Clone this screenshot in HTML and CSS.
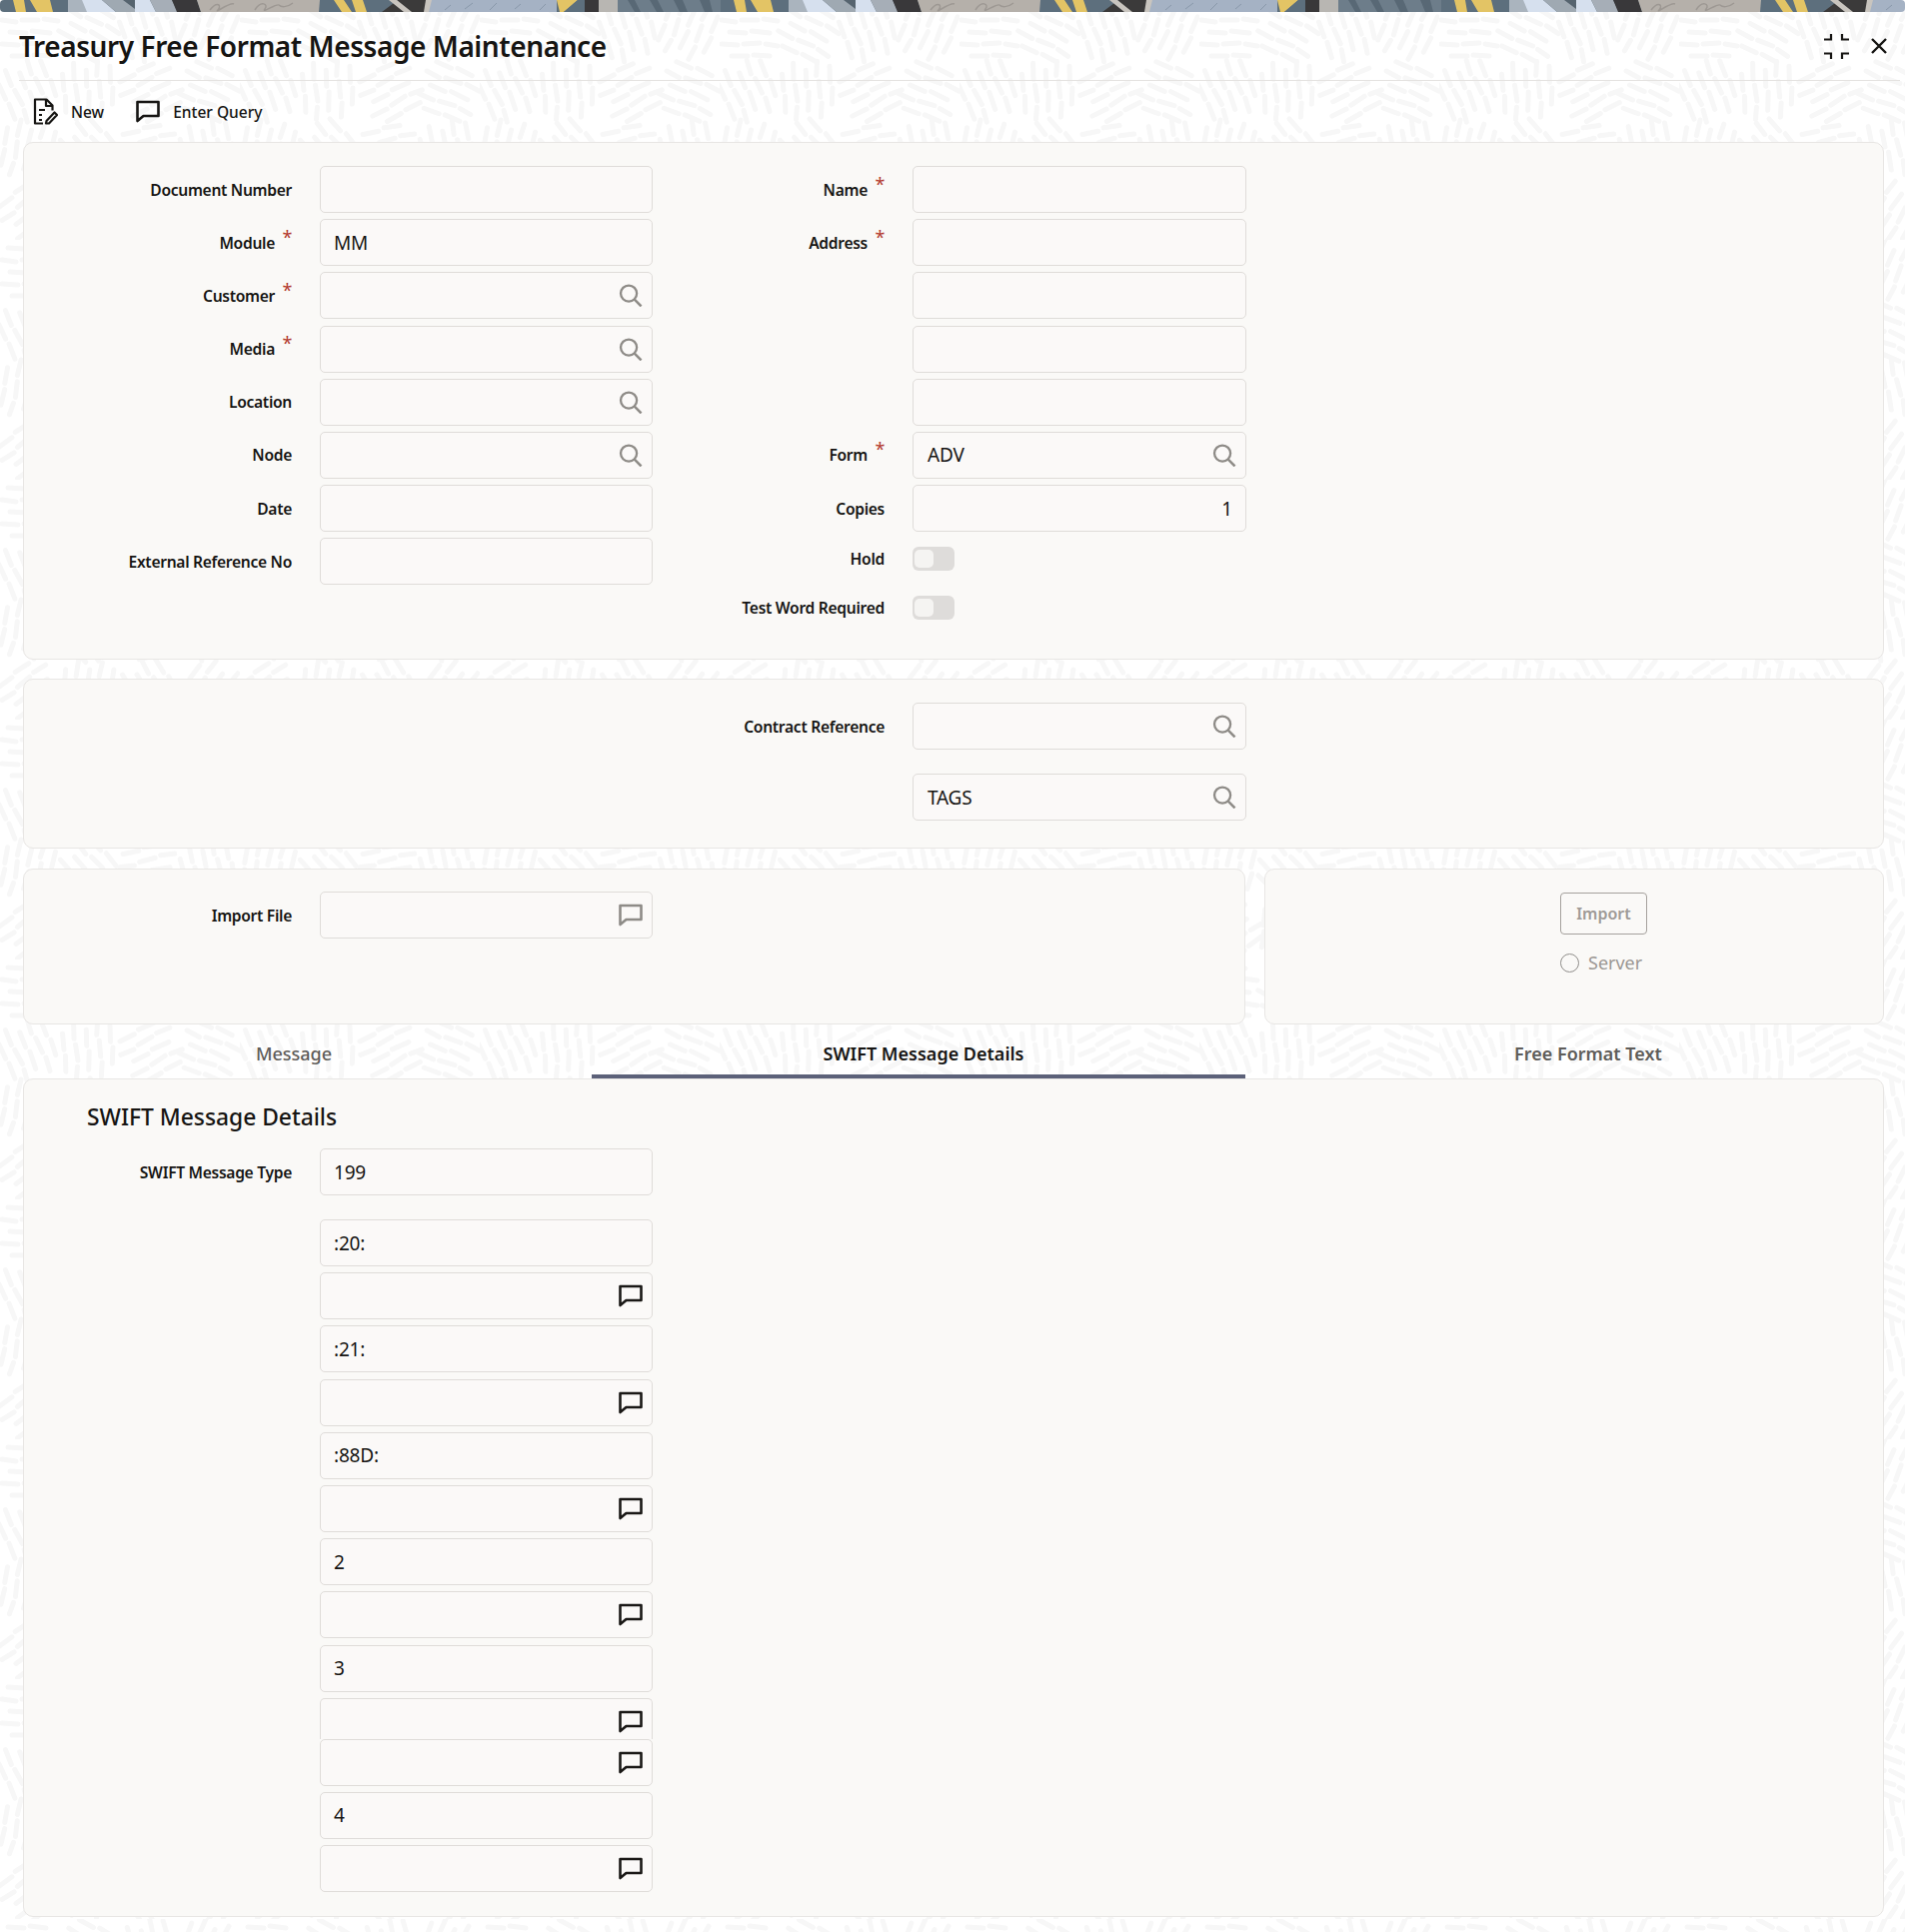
FILE: index.html
```html
<!DOCTYPE html>
<html lang="en">

<head>
    <meta charset="UTF-8">
    <title>Treasury Free Format Message Maintenance</title>
    <link rel="stylesheet" href="styles.css">
</head>

<body>
    <!-- shared icons -->
    <svg class="defs" width="0" height="0">
        <defs>
            <symbol id="i-search" viewBox="0 0 24 24">
                <circle cx="10" cy="10" r="8.4" fill="none" stroke="currentColor" stroke-width="2.4"/>
                <path d="M16 16.4l7 7" fill="none" stroke="currentColor" stroke-width="2.6"/>
            </symbol>
            <symbol id="i-chat" viewBox="0 0 24 23">
                <path d="M1.5 2h21v14H7.500L1.500 21z" fill="none" stroke="currentColor" stroke-width="2.600" stroke-linejoin="round"/>
            </symbol>
            <pattern id="grain-tile" patternUnits="userSpaceOnUse" width="240" height="240">
                <g id="grain-cell">
                    <path id="grains" d="M8 8l16 1M30 7l16 2M2 20l14 2M22 20l16 0M44 19l14 2M10 32l16 1M32 31l18 2M2 44l16 1M24 44l16-1M46 44l12 2M12 56l16 0M34 55l16 1" fill="none" stroke="#f7f7f7" stroke-width="5" stroke-linecap="round"/>
                </g>
                <use href="#grains" transform="translate(60 0) rotate(25 30 30)"/>
                <use href="#grains" transform="translate(120 0) rotate(70 30 30)"/>
                <use href="#grains" transform="translate(180 0) rotate(110 30 30)"/>
                <use href="#grains" transform="translate(0 60) rotate(65 30 30)"/>
                <use href="#grains" transform="translate(60 60) rotate(85 30 30)"/>
                <use href="#grains" transform="translate(120 60) rotate(-30 30 30)"/>
                <use href="#grains" transform="translate(180 60) rotate(20 30 30)"/>
                <use href="#grains" transform="translate(0 120) rotate(100 30 30)"/>
                <use href="#grains" transform="translate(60 120) rotate(45 30 30)"/>
                <use href="#grains" transform="translate(120 120) rotate(-15 30 30)"/>
                <use href="#grains" transform="translate(180 120) rotate(75 30 30)"/>
                <use href="#grains" transform="translate(0 180) rotate(-40 30 30)"/>
                <use href="#grains" transform="translate(60 180) rotate(95 30 30)"/>
                <use href="#grains" transform="translate(120 180) rotate(55 30 30)"/>
                <use href="#grains" transform="translate(180 180) rotate(-60 30 30)"/>
            </pattern>
            <pattern id="banner-tile" patternUnits="userSpaceOnUse" width="721" height="12">
                <rect width="721" height="12" fill="#5d6f7d"/>
                <path d="M13 0h11l2 12H16zM30 0h20l3 12H37z" fill="#e3c465"/>
                <path d="M68 0h16l4 12H68z" fill="#aab4be"/>
                <path d="M82 0h20l14 12H87z" fill="#d6e0ee"/>
                <path d="M102 0h33v12H116z" fill="#9fa9b2"/>
                <path d="M123 0h12v9z" fill="#56646f"/>
                <path d="M135 0h15l6 12H135z" fill="#d6e0ee"/>
                <path d="M150 0h22l6 12H156z" fill="#a6aeb7"/>
                <path d="M172 0h25l4 12H177z" fill="#39383a"/>
                <path d="M197 0h123l-1 12H201z" fill="#b5b0aa"/>
                <path d="M210 10c8-10 12-4 8 0s12-8 16-6M255 10c6-10 14-6 10-1s12-6 14-4s8 3 14-2" fill="none" stroke="#9d9893" stroke-width="1.500"/>
                <path d="M334 0h10l8 12H342zM352 0h11l4 12H356z" fill="#e3c465"/>
                <path d="M382 12l16-12h36l-6 12z" fill="#3b3a3a"/>
                <path d="M389 0h8l15 12h-8z" fill="#c9c5bf"/>
                <path d="M426 0h10l-6 12h-6z" fill="#c9c5bf"/>
                <path d="M432 0h125v12H429z" fill="#a5b2c4"/>
                <path d="M445 10l6-5M465 9l8-6M490 10l7-7M515 9l6-5M540 10l6-6" fill="none" stroke="#8998aa" stroke-width="1"/>
                <path d="M557 0h21l-14 12h-4z" fill="#e3c465"/>
                <path d="M578 0h7v12H564z" fill="#5d6f7d"/>
                <rect x="585" width="14" height="12" fill="#39383a"/>
                <rect x="599" width="19" height="12" fill="#b8b6b2"/>
                <path d="M618 0h103v12H618z" fill="#6d7d8a"/>
                <path d="M628 0h7l6 12h-6zM650 0h8l6 12h-7zM674 0h9l5 12h-8zM700 0h10l3 12h-8z" fill="#586875"/>
            </pattern>
        </defs>
    </svg>

    <div class="window">
        <svg class="texture" width="100%" height="100%"><rect width="100%" height="100%" fill="url(#grain-tile)"/></svg>
        <svg class="banner" width="100%" height="12"><rect width="100%" height="12" fill="url(#banner-tile)"/></svg>

        <header class="title-bar">
            <h1 class="title">Treasury Free Format Message Maintenance</h1>
            <div class="window-actions">
                <button class="icon-btn">
                    <svg width="26" height="25" viewBox="0 0 26 25" fill="none" stroke="#161513" stroke-width="2.200"><path d="M0 5.500h7V0M18 0v5.500h7M0 19.500h7V25M18 25v-5.500h7"/></svg>
                </button>
                <button class="icon-btn">
                    <svg width="16" height="16" viewBox="0 0 16 16" fill="none" stroke="#161513" stroke-width="2.400"><path d="M1 1l14 14M15 1L1 15"/></svg>
                </button>
            </div>
        </header>

        <nav class="toolbar">
            <a class="tool" href="#">
                <svg width="25" height="27" viewBox="0 0 25 27" fill="none" stroke="#161513" stroke-width="2.200" stroke-linejoin="round"><path d="M10 25.500H2V1.500h11.500l6 6v5"/><path d="M13 1.500v6.500h6.500M6 12h6M6 17h3M6 22h3"/><path d="M13.500 23l8-8.500 2.500 2.500-8 8.500h-3z"/></svg>
                New
            </a>
            <a class="tool" href="#">
                <svg class="chat-lg"><use href="#i-chat"/></svg>
                Enter Query
            </a>
        </nav>

        <section class="panel panel-main">
            <div class="col">
                <div class="field"><label class="label">Document Number</label><div class="input"></div></div>
                <div class="field"><label class="label">Module<span class="req">*</span></label><div class="input">MM</div></div>
                <div class="field"><label class="label">Customer<span class="req">*</span></label><div class="input"><svg class="ico"><use href="#i-search"/></svg></div></div>
                <div class="field"><label class="label">Media<span class="req">*</span></label><div class="input"><svg class="ico"><use href="#i-search"/></svg></div></div>
                <div class="field"><label class="label">Location</label><div class="input"><svg class="ico"><use href="#i-search"/></svg></div></div>
                <div class="field"><label class="label">Node</label><div class="input"><svg class="ico"><use href="#i-search"/></svg></div></div>
                <div class="field"><label class="label">Date</label><div class="input"></div></div>
                <div class="field"><label class="label">External Reference No</label><div class="input"></div></div>
            </div>
            <div class="col col-right">
                <div class="field"><label class="label">Name<span class="req">*</span></label><div class="input"></div></div>
                <div class="field"><label class="label">Address<span class="req">*</span></label><div class="input"></div></div>
                <div class="field"><span></span><div class="input"></div></div>
                <div class="field"><span></span><div class="input"></div></div>
                <div class="field"><span></span><div class="input"></div></div>
                <div class="field"><label class="label">Form<span class="req">*</span></label><div class="input">ADV<svg class="ico"><use href="#i-search"/></svg></div></div>
                <div class="field"><label class="label">Copies</label><div class="input input-num">1</div></div>
                <div class="field field-toggle first"><label class="label">Hold</label><span class="toggle"></span></div>
                <div class="field field-toggle"><label class="label">Test Word Required</label><span class="toggle"></span></div>
            </div>
        </section>

        <section class="panel panel-contract">
            <div class="col"></div>
            <div class="col col-right">
                <div class="field"><label class="label">Contract Reference</label><div class="input"><svg class="ico"><use href="#i-search"/></svg></div></div>
                <div class="field field-tags"><span></span><div class="input">TAGS<svg class="ico"><use href="#i-search"/></svg></div></div>
            </div>
        </section>

        <div class="import-row">
            <section class="panel panel-import">
                <div class="col">
                    <div class="field"><label class="label">Import File</label><div class="input"><svg class="ico"><use href="#i-chat"/></svg></div></div>
                </div>
            </section>
            <section class="panel panel-action">
                <button class="btn">Import</button>
                <div class="radio-row"><span class="radio"></span>Server</div>
            </section>
        </div>

        <div class="tabs">
            <div class="tab tab-message">Message</div>
            <div class="tab tab-swift active">SWIFT Message Details</div>
            <div class="tab tab-free">Free Format Text</div>
        </div>

        <section class="panel panel-swift">
            <h2 class="section-title">SWIFT Message Details</h2>
            <div class="col">
                <div class="field field-type"><label class="label">SWIFT Message Type</label><div class="input">199</div></div>
                <div class="field"><span></span><div class="input">:20:</div></div>
                <div class="field"><span></span><div class="input"><svg class="ico dark"><use href="#i-chat"/></svg></div></div>
                <div class="field"><span></span><div class="input">:21:</div></div>
                <div class="field"><span></span><div class="input"><svg class="ico dark"><use href="#i-chat"/></svg></div></div>
                <div class="field"><span></span><div class="input">:88D:</div></div>
                <div class="field"><span></span><div class="input"><svg class="ico dark"><use href="#i-chat"/></svg></div></div>
                <div class="field"><span></span><div class="input">2</div></div>
                <div class="field"><span></span><div class="input"><svg class="ico dark"><use href="#i-chat"/></svg></div></div>
                <div class="field"><span></span><div class="input">3</div></div>
                <div class="field field-clipped"><span></span><div class="input input-clipped"><svg class="ico dark"><use href="#i-chat"/></svg></div></div>
                <div class="field"><span></span><div class="input"><svg class="ico dark"><use href="#i-chat"/></svg></div></div>
                <div class="field"><span></span><div class="input">4</div></div>
                <div class="field"><span></span><div class="input"><svg class="ico dark"><use href="#i-chat"/></svg></div></div>
            </div>
        </section>
    </div>
</body>

</html>
```
FILE: styles.css
```css
* {
    margin: 0;
    padding: 0;
    box-sizing: border-box;
}

body {
    font-family: "Noto Sans", Arial, sans-serif;
    color: #161513;
    background: #fff;
    overflow: hidden;
}

.defs {
    position: absolute;
}

.window {
    position: relative;
    height: 1933px;
    background: #fff;
    overflow: hidden;
}

.texture {
    position: absolute;
    inset: 0;
}

.banner {
    position: relative;
    display: block;
    border-radius: 4px;
}

.title-bar {
    position: relative;
    display: flex;
    justify-content: space-between;
    align-items: center;
    height: 69px;
    margin: 0 5px 0 19px;
    border-bottom: 1px solid #e4e2e0;
}

.title {
    font-size: 28px;
    font-weight: 600;
    line-height: 1;
    letter-spacing: -0.42px;
}

.window-actions {
    display: flex;
    align-items: center;
    gap: 21px;
    margin-right: 13px;
}

.icon-btn {
    display: flex;
    background: none;
    border: none;
}

.toolbar {
    position: relative;
    display: flex;
    align-items: center;
    gap: 32px;
    height: 61px;
    padding-left: 33px;
}

.tool {
    display: flex;
    align-items: center;
    gap: 13px;
    color: #161513;
    text-decoration: none;
    font-size: 15.500px;
    font-weight: 500;
}

.chat-lg {
    width: 24px;
    height: 23px;
}

.panel {
    position: relative;
    background: #faf9f7;
    border: 1px solid #e8e6e4;
    border-radius: 10px;
}

.panel-main {
    display: flex;
    height: 518px;
    margin: 0 21px 19px 23px;
    padding-top: 23px;
}

.panel-contract {
    display: flex;
    height: 170px;
    margin: 0 21px 20px 23px;
    padding-top: 23px;
}

.col {
    width: 629px;
    flex-shrink: 0;
}

.col-right {
    width: 594px;
}

.col-right .field {
    grid-template-columns: 232px 334px;
}

.col-right .input {
    padding-left: 14px;
}

.field {
    display: grid;
    grid-template-columns: 268px 333px;
    column-gap: 28px;
    align-items: center;
    margin-bottom: 6.200px;
}

.label {
    text-align: right;
    font-size: 15.600px;
    font-weight: 600;
    letter-spacing: -0.3px;
}

.req {
    display: inline-block;
    width: 17px;
    height: 0;
    color: #b3392f;
    font-size: 18px;
    font-weight: 400;
    line-height: 0;
    vertical-align: 5px;
}

.input {
    display: flex;
    align-items: center;
    justify-content: space-between;
    height: 47px;
    padding: 0 9px 0 13px;
    background: #fbf9f8;
    border: 1px solid #dfdcd9;
    border-radius: 5px;
    font-size: 19px;
    font-weight: 400;
    letter-spacing: -0.2px;
}

.col-right .input-num {
    justify-content: flex-end;
    padding-right: 13px;
}

.ico {
    width: 24px;
    height: 23px;
    margin-left: auto;
    color: #8e8b87;
}

.ico.dark {
    color: #1a1816;
}

.field-toggle {
    margin-bottom: 25px;
}

.field-toggle.first {
    margin-top: 15px;
}

.toggle {
    position: relative;
    display: block;
    width: 42px;
    height: 24px;
    background: #dedcda;
    border-radius: 6px;
}

.toggle::after {
    content: "";
    position: absolute;
    left: 2px;
    top: 3px;
    width: 19px;
    height: 18px;
    background: #f5f4f2;
    border-radius: 5px;
}

.field-tags {
    margin-top: 24px;
}

.import-row {
    display: flex;
    gap: 19px;
    margin: 0 21px 0 23px;
}

.panel-import {
    width: 1223px;
    height: 156px;
    padding-top: 22px;
}

.panel-action {
    flex: 1;
    height: 156px;
    padding: 23px 0 0 295px;
}

.btn {
    display: block;
    width: 87px;
    height: 42px;
    background: transparent;
    border: 1px solid #a5a19d;
    border-radius: 4px;
    color: #9f9b97;
    font-family: inherit;
    font-size: 16px;
    font-weight: 600;
}

.radio-row {
    display: flex;
    align-items: center;
    gap: 9px;
    margin-top: 16px;
    color: #9c9894;
    font-size: 18px;
}

.radio {
    width: 19px;
    height: 19px;
    border: 1.500px solid #8f8d8a;
    border-radius: 50%;
}

.tabs {
    position: relative;
    display: grid;
    grid-template-columns: 592px 654px 660px;
    height: 54px;
}

.tab {
    display: flex;
    align-items: center;
    justify-content: center;
    padding-top: 3px;
    color: #5f5d5a;
    font-size: 18px;
    font-weight: 500;
}

.tab-message {
    padding-right: 4px;
}

.tab-swift {
    padding-left: 10px;
}

.tab-free {
    padding-left: 26px;
    font-weight: 600;
}

.tab.active {
    padding-top: 7px;
    color: #161513;
    font-weight: 600;
    border-bottom: 4px solid #5c6179;
}

.panel-swift {
    height: 839px;
    margin: 0 21px 0 23px;
}

.section-title {
    height: 69px;
    padding: 21px 0 0 63px;
    font-size: 22.800px;
    font-weight: 500;
    line-height: 34px;
}

.field-type {
    margin-bottom: 24px;
}

.field-clipped {
    margin-bottom: 0;
}

.input-clipped {
    height: 41px;
    border-bottom: 0;
    border-radius: 5px 5px 0 0;
}

.input-clipped .ico {
    margin-top: 6px;
}
```
